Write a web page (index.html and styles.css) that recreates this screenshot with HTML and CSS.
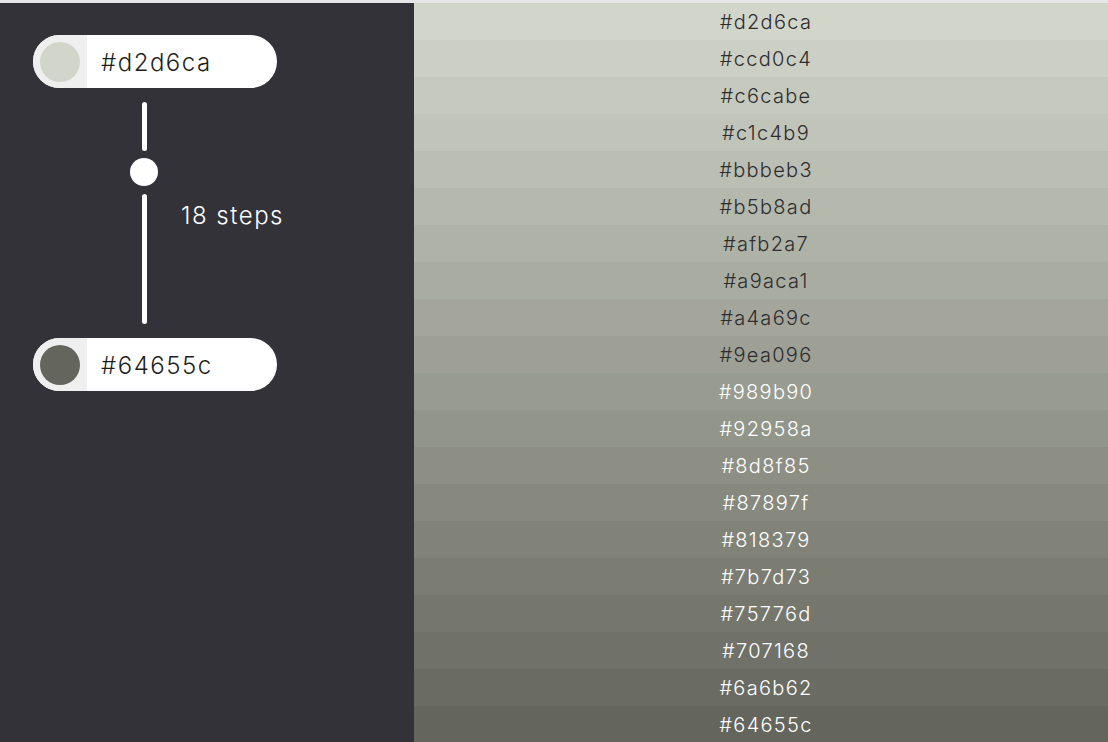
FILE: index.html
```html
<!DOCTYPE html>
<html>
<head>
<meta charset="utf-8">
<link rel="stylesheet" href="styles.css">
</head>
<body>
<div class="app">
  <aside class="panel">
    <div class="pill">
      <div class="swatch-area"><span class="dot" style="background:#d2d6ca"></span></div>
      <span class="pill-text">#d2d6ca</span>
    </div>
    <div class="steps">
      <div class="slider">
        <span class="line line-top"></span>
        <span class="knob"></span>
        <span class="line line-bottom"></span>
      </div>
      <span class="steps-label">18 steps</span>
    </div>
    <div class="pill">
      <div class="swatch-area"><span class="dot" style="background:#64655c"></span></div>
      <span class="pill-text">#64655c</span>
    </div>
  </aside>
  <main class="scale">
    <div class="row dark-text" style="background:#d2d6ca">#d2d6ca</div>
    <div class="row dark-text" style="background:#ccd0c4">#ccd0c4</div>
    <div class="row dark-text" style="background:#c6cabe">#c6cabe</div>
    <div class="row dark-text" style="background:#c1c4b9">#c1c4b9</div>
    <div class="row dark-text" style="background:#bbbeb3">#bbbeb3</div>
    <div class="row dark-text" style="background:#b5b8ad">#b5b8ad</div>
    <div class="row dark-text" style="background:#afb2a7">#afb2a7</div>
    <div class="row dark-text" style="background:#a9aca1">#a9aca1</div>
    <div class="row dark-text" style="background:#a4a69c">#a4a69c</div>
    <div class="row dark-text" style="background:#9ea096">#9ea096</div>
    <div class="row light-text" style="background:#989b90">#989b90</div>
    <div class="row light-text" style="background:#92958a">#92958a</div>
    <div class="row light-text" style="background:#8d8f85">#8d8f85</div>
    <div class="row light-text" style="background:#87897f">#87897f</div>
    <div class="row light-text" style="background:#818379">#818379</div>
    <div class="row light-text" style="background:#7b7d73">#7b7d73</div>
    <div class="row light-text" style="background:#75776d">#75776d</div>
    <div class="row light-text" style="background:#707168">#707168</div>
    <div class="row light-text" style="background:#6a6b62">#6a6b62</div>
    <div class="row light-text" style="background:#64655c">#64655c</div>
  </main>
</div>
</body>
</html>
```

FILE: styles.css
```css
html, body {
  margin: 0;
  padding: 0;
  height: 100%;
  overflow: hidden;
}
body {
  background: #e6e6e6;
  padding-top: 3px;
  box-sizing: border-box;
  font-family: Inter, "Noto Sans", sans-serif;
  font-weight: 300;
}
.app {
  display: flex;
  height: 739px;
  overflow: hidden;
}
.panel {
  width: 414px;
  flex: none;
  background: #333238;
  padding: 32px 0 0 33px;
  box-sizing: border-box;
  display: flex;
  flex-direction: column;
}
.pill {
  width: 244px;
  height: 53px;
  border-radius: 27px;
  background: #ffffff;
  display: flex;
  align-items: center;
  overflow: hidden;
}
.swatch-area {
  width: 54px;
  height: 100%;
  background: #efefef;
  display: flex;
  align-items: center;
  justify-content: center;
  flex: none;
}
.dot {
  width: 40px;
  height: 40px;
  border-radius: 50%;
  display: block;
}
.pill-text {
  padding-left: 14px;
  padding-top: 2px;
  font-size: 24px;
  color: #1f1f22;
  letter-spacing: 1.5px;
}
.steps {
  display: flex;
  align-items: center;
  height: 250px;
  padding-left: 97px;
}
.slider {
  width: 28px;
  display: flex;
  flex-direction: column;
  align-items: center;
  padding: 14px 0;
  box-sizing: border-box;
  height: 100%;
}
.line {
  width: 5px;
  border-radius: 3px;
  background: #ffffff;
  display: block;
}
.line-top { height: 49px; }
.line-bottom { height: 130px; margin-top: 8px; }
.knob {
  width: 28px;
  height: 28px;
  border-radius: 50%;
  background: #ffffff;
  display: block;
  margin-top: 7px;
}
.steps-label {
  margin-left: 23px;
  padding-top: 4px;
  font-size: 24px;
  color: #ffffff;
  letter-spacing: 1.5px;
}
.scale {
  flex: 1;
  display: flex;
  flex-direction: column;
}
.row {
  height: 37px;
  flex: none;
  display: flex;
  align-items: center;
  justify-content: center;
  padding-left: 10px;
  font-size: 20px;
  letter-spacing: 1.3px;
}
.dark-text { color: #2d2d30; }
.light-text { color: #ffffff; }
```
